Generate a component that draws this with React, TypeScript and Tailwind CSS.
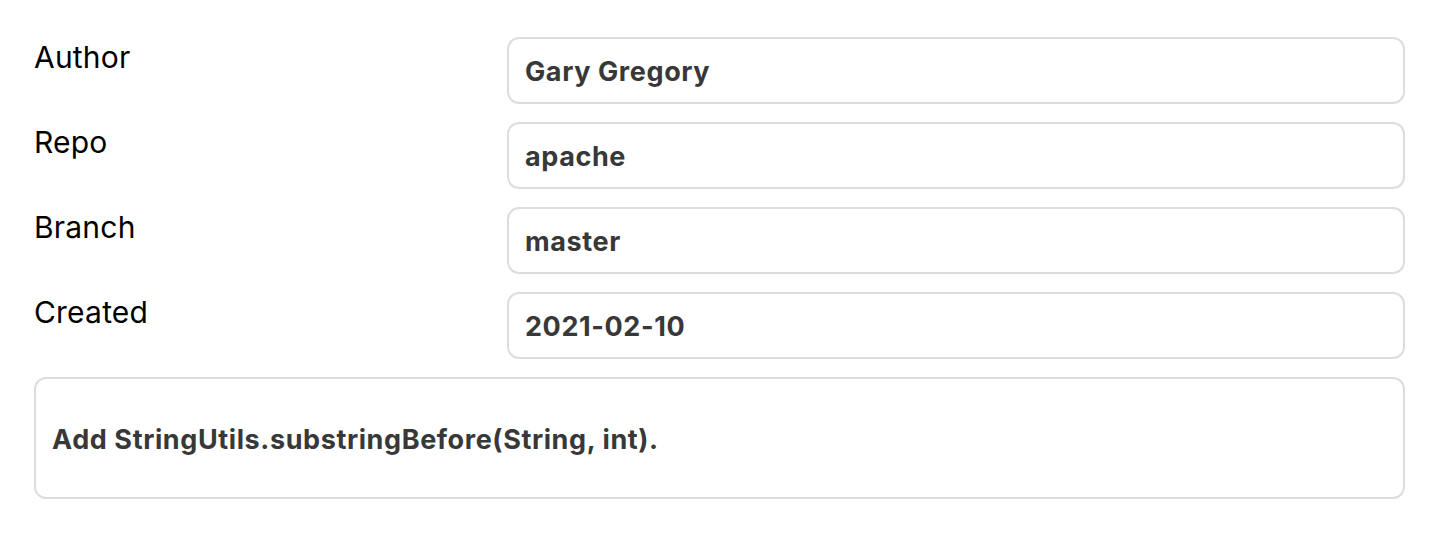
import React from 'react';

const fields = [
  { label: 'Author', value: 'Gary Gregory' },
  { label: 'Repo', value: 'apache' },
  { label: 'Branch', value: 'master' },
  { label: 'Created', value: '2021-02-10' },
];

export default function App() {
  return (
    <div className="min-h-[538px] bg-white px-[34px] pt-[37px] font-['Inter',sans-serif]">
      <div className="w-[1371px] flex flex-col gap-[18px]">
        {fields.map((f) => (
          <div key={f.label} className="flex">
            <div className="w-[473px] pt-[2px] text-[30px] leading-[36px] tracking-[0.2px] text-black">
              {f.label}
            </div>
            <div className="flex-1 h-[67px] rounded-[12px] border-2 border-[#dddddd] pl-[16px] pr-4 pt-[3px] flex items-center text-[27px] tracking-[0.6px] font-bold text-[#383838]">
              {f.value}
            </div>
          </div>
        ))}
        <div className="h-[122px] rounded-[12px] border-2 border-[#dddddd] pl-[16px] pr-4 pt-[4px] flex items-center text-[27px] tracking-[0.6px] font-bold text-[#383838]">
          Add StringUtils.substringBefore(String, int).
        </div>
      </div>
    </div>
  );
}
